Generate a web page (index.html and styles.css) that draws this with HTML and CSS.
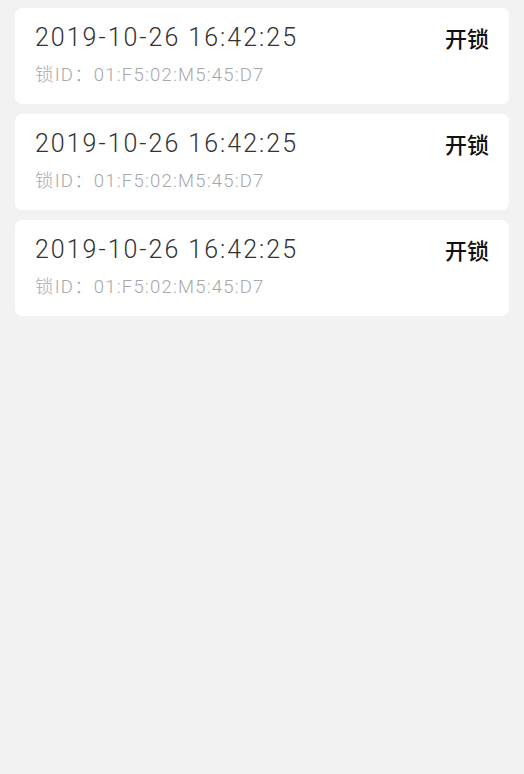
FILE: index.html
```html
<!DOCTYPE html>
<html lang="zh-CN">
<head>
<meta charset="utf-8">
<title>开锁记录</title>
<link rel="stylesheet" href="styles.css">
</head>
<body>
<div class="list">
  <div class="card">
    <div class="info">
      <div class="time">2019-10-26 16:42:25</div>
      <div class="lock-id">锁ID：01:F5:02:M5:45:D7</div>
    </div>
    <div class="action">开锁</div>
  </div>
  <div class="card">
    <div class="info">
      <div class="time">2019-10-26 16:42:25</div>
      <div class="lock-id">锁ID：01:F5:02:M5:45:D7</div>
    </div>
    <div class="action">开锁</div>
  </div>
  <div class="card">
    <div class="info">
      <div class="time">2019-10-26 16:42:25</div>
      <div class="lock-id">锁ID：01:F5:02:M5:45:D7</div>
    </div>
    <div class="action">开锁</div>
  </div>
</div>
</body>
</html>
```
FILE: styles.css
```css
html, body {
  margin: 0;
  padding: 0;
  background: #f2f2f2;
  height: 100%;
}
body {
  font-family: Roboto, "Noto Sans CJK SC", sans-serif;
}
.list {
  display: flex;
  flex-direction: column;
  gap: 10px;
  padding: 8px 15px;
}
.card {
  background: #ffffff;
  border-radius: 7px;
  height: 96px;
  box-sizing: border-box;
  padding: 0 20px;
  display: flex;
  justify-content: space-between;
  align-items: flex-start;
}
.info {
  display: flex;
  flex-direction: column;
}
.time {
  margin-top: 14px;
  font-size: 25px;
  line-height: 32px;
  font-weight: 300;
  color: #333333;
  letter-spacing: 2px;
}
.lock-id {
  margin-top: 9px;
  font-size: 18.5px;
  line-height: 24px;
  font-weight: 300;
  color: #a8a8a8;
  letter-spacing: 1.2px;
}
.action {
  margin-top: 14px;
  font-family: "Noto Sans CJK SC", sans-serif;
  font-size: 22px;
  line-height: 30px;
  color: #111111;
  font-weight: 500;
}
```
